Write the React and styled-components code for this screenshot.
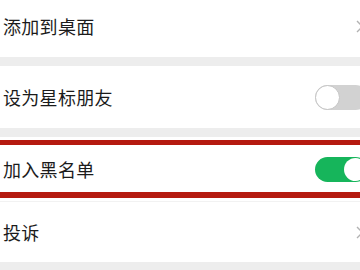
import React from "react";
import styled, { createGlobalStyle } from "styled-components";

const GlobalStyle = createGlobalStyle`
  html, body {
    margin: 0;
    padding: 0;
    background: #ededed;
    overflow: hidden;
  }
  body {
    font-family: "Noto Sans CJK SC", "Noto Sans", sans-serif;
  }
`;

const Screen = styled.div`
  width: 360px;
  height: 270px;
  overflow: hidden;
  background: #ededed;
`;

const List = styled.div`
  width: 368px;
  display: flex;
  flex-direction: column;
`;

const Section = styled.div`
  display: flex;
  flex-direction: column;
  background: #ffffff;
  margin-top: ${(props) => (props.offset ? props.offset : "9px")};
  position: relative;
`;

const Row = styled.div`
  height: ${(props) => (props.height ? props.height : "62px")};
  display: flex;
  align-items: center;
  justify-content: space-between;
  padding-left: 3px;
  box-sizing: border-box;
  border-top: ${(props) => (props.divider ? "1px solid #f2f2f2" : "none")};
`;

const Label = styled.span`
  font-size: 18px;
  line-height: 1;
  color: #1b1b1b;
  letter-spacing: 0.3px;
`;

const Track = styled.div`
  width: 53px;
  height: 25px;
  border-radius: 13px;
  box-sizing: border-box;
  background: ${(props) => (props.on ? "#16b55b" : "#d2d2d2")};
  display: flex;
  justify-content: ${(props) => (props.on ? "flex-end" : "flex-start")};
  align-items: center;
  padding: 0 1px;
`;

const Knob = styled.div`
  width: 24px;
  height: 24px;
  border-radius: 50%;
  background: #ffffff;
  box-sizing: border-box;
  border: ${(props) => (props.on ? "none" : "1px solid #c4c4c4")};
  width: ${(props) => (props.on ? "23px" : "25px")};
  height: ${(props) => (props.on ? "23px" : "25px")};
  margin-left: ${(props) => (props.on ? "0" : "-1px")};
`;

const Chevron = styled.svg`
  width: 8px;
  height: 13px;
  margin-right: 4px;
`;

const Highlight = styled.div`
  position: absolute;
  left: -4px;
  right: -4px;
  top: ${(props) => props.top};
  height: ${(props) => props.height};
  border-top: 5px solid #b51a10;
  border-bottom: 6px solid #b51a10;
  box-sizing: border-box;
  pointer-events: none;
`;

const Arrow = () => (
  <Chevron viewBox="0 0 8 13">
    <path d="M1 1 L6.5 6.5 L1 12" fill="none" stroke="#b2b2b2" strokeWidth="1.4" />
  </Chevron>
);

const Toggle = ({ on }) => (
  <Track on={on ? 1 : 0}>
    <Knob on={on ? 1 : 0} />
  </Track>
);

export default function App() {
  return (
    <Screen>
      <GlobalStyle />
      <List>
        <Section offset="-5px">
          <Row>
            <Label>添加到桌面</Label>
            <Arrow />
          </Row>
        </Section>
        <Section>
          <Row>
            <Label>设为星标朋友</Label>
            <Toggle />
          </Row>
        </Section>
        <Section>
          <Row height="64px">
            <Label>加入黑名单</Label>
            <Toggle on />
          </Row>
          <Row height="61px" divider>
            <Label>投诉</Label>
            <Arrow />
          </Row>
          <Highlight top="3px" height="58px" />
        </Section>
      </List>
    </Screen>
  );
}
